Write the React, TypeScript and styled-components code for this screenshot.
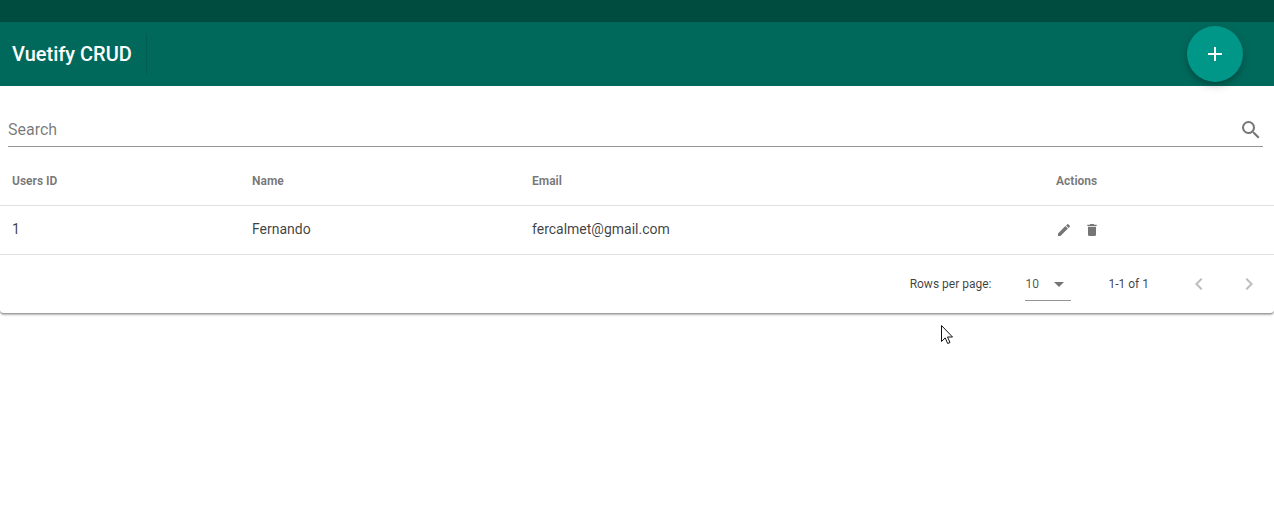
import React from "react";
import styled, { createGlobalStyle } from "styled-components";

const GlobalStyle = createGlobalStyle`
  *, *::before, *::after { box-sizing: border-box; }
  body {
    margin: 0;
    background: #fff;
    color: rgba(0, 0, 0, 0.87);
    font-family: Roboto, "Liberation Sans", sans-serif;
    font-size: 16px;
    line-height: 24px;
  }
  button, input, select { font: inherit; color: inherit; }
`;

const Page = styled.div`
  position: relative;
  min-height: 100vh;
`;

const SystemBar = styled.div`
  height: 22px;
  background: #004d40;
`;

const Toolbar = styled.header`
  position: relative;
  z-index: 1;
  display: flex;
  align-items: center;
  height: 64px;
  padding: 0 31px 0 12px;
  background: #00695c;
  color: #fff;
`;

const Title = styled.h1`
  margin: 0;
  font-size: 20px;
  font-weight: 500;
  line-height: 24px;
`;

const ToolbarDivider = styled.span`
  width: 1px;
  height: 40px;
  margin-left: 14px;
  background: rgba(0, 0, 0, 0.12);
`;

const Spacer = styled.div`
  flex: 1;
`;

const IconSvg = styled.svg<{ $size: number }>`
  display: block;
  flex: none;
  width: ${(p) => p.$size}px;
  height: ${(p) => p.$size}px;
  fill: currentColor;
`;

const AddButton = styled.button`
  display: flex;
  align-items: center;
  justify-content: center;
  width: 56px;
  height: 56px;
  padding: 0;
  border: 0;
  border-radius: 50%;
  background: #009688;
  cursor: pointer;
  box-shadow: 0 3px 5px -1px rgba(0, 0, 0, 0.2), 0 5px 8px rgba(0, 0, 0, 0.1),
    0 1px 14px rgba(0, 0, 0, 0.06);
`;

const Card = styled.main`
  border-bottom: 1px solid #a0a0a0;
  border-radius: 0 0 4px 4px;
  background: #fff;
  box-shadow: 0 1px 2px rgba(0, 0, 0, 0.3);
`;

const SearchField = styled.label`
  display: flex;
  align-items: center;
  height: 37px;
  margin: 0 11px 10px 8px;
  padding-top: 3px;
  border-bottom: 1px solid rgba(0, 0, 0, 0.42);
  color: rgba(0, 0, 0, 0.54);
`;

const SearchArea = styled.section`
  padding-top: 24px;
  overflow: hidden;
`;

const SearchInput = styled.input`
  flex: 1;
  min-width: 0;
  height: 32px;
  padding: 0;
  border: 0;
  outline: 0;
  background: transparent;
  &::placeholder {
    color: rgba(0, 0, 0, 0.54);
    opacity: 1;
  }
`;

const Table = styled.table`
  width: 100%;
  table-layout: fixed;
  border-collapse: separate;
  border-spacing: 0;
`;

const HeadCell = styled.th<{ $width?: number }>`
  width: ${(p) => (p.$width ? `${p.$width}px` : "auto")};
  height: 49px;
  padding: 0 12px;
  border-bottom: 1px solid rgba(0, 0, 0, 0.12);
  color: rgba(0, 0, 0, 0.54);
  font-size: 12px;
  font-weight: 700;
  text-align: left;
`;

const Cell = styled.td`
  height: 49px;
  padding: 0 12px 2px;
  border-bottom: 1px solid rgba(0, 0, 0, 0.12);
  color: rgba(0, 0, 0, 0.76);
  font-size: 14px;
`;

const Actions = styled.div`
  display: flex;
  gap: 12px;
  padding-top: 2px;
`;

const IconButton = styled.button`
  display: flex;
  padding: 0;
  border: 0;
  background: none;
  color: rgba(0, 0, 0, 0.54);
  cursor: pointer;
`;

const Footer = styled.footer`
  display: flex;
  align-items: center;
  justify-content: flex-end;
  height: 58px;
  padding-right: 7px;
  color: rgba(0, 0, 0, 0.76);
  font-size: 12px;
`;

const PageSize = styled.label`
  display: flex;
  align-items: center;
  gap: 34px;
`;

const SelectBox = styled.span`
  display: grid;
  align-items: center;
  justify-items: end;
  width: 46px;
  height: 33px;
  border-bottom: 1px solid rgba(0, 0, 0, 0.42);
  color: rgba(0, 0, 0, 0.54);
  > * { grid-area: 1 / 1; }
  > svg { pointer-events: none; }
`;

const Select = styled.select`
  width: 100%;
  height: 32px;
  padding: 0;
  border: 0;
  outline: 0;
  appearance: none;
  background: transparent;
  color: rgba(0, 0, 0, 0.7);
`;

const PageRange = styled.span`
  margin: 0 32px 0 37px;
`;

const Pager = styled.nav`
  display: flex;
  gap: 14px;
`;

const PageButton = styled.button`
  display: flex;
  align-items: center;
  justify-content: center;
  width: 36px;
  height: 36px;
  padding: 0;
  border: 0;
  background: none;
  color: rgba(0, 0, 0, 0.26);
`;

const Pointer = styled.svg`
  position: absolute;
  top: 325px;
  left: 941px;
  width: 12px;
  height: 20px;
  pointer-events: none;
`;

const paths = {
  plus: "M19 13h-6v6h-2v-6H5v-2h6V5h2v6h6v2z",
  search:
    "M9.5 3A6.5 6.5 0 0 1 16 9.5c0 1.61-.59 3.09-1.56 4.23l.27.27h.79l5 5-1.5 1.5-5-5v-.79l-.27-.27A6.516 6.516 0 0 1 9.5 16a6.5 6.5 0 0 1 0-13m0 2C7 5 5 7 5 9.5S7 14 9.5 14 14 12 14 9.5 12 5 9.5 5z",
  pencil:
    "M20.71 7.04c.39-.39.39-1.04 0-1.41l-2.34-2.34c-.37-.39-1.02-.39-1.41 0l-1.84 1.83 3.75 3.75M3 17.25V21h3.75L17.81 9.93l-3.75-3.75L3 17.25z",
  trash:
    "M19 4h-3.5l-1-1h-5l-1 1H5v2h14M6 19a2 2 0 0 0 2 2h8a2 2 0 0 0 2-2V7H6v12z",
  caret: "M7 10l5 5 5-5H7z",
  left: "M15.41 16.58L10.83 12l4.58-4.59L14 6l-6 6 6 6 1.41-1.42z",
  right: "M8.59 16.58L13.17 12 8.59 7.41 10 6l6 6-6 6-1.41-1.42z",
};

function Icon({ name, size = 24 }: { name: keyof typeof paths; size?: number }) {
  return (
    <IconSvg $size={size} viewBox="0 0 24 24" aria-hidden="true">
      <path d={paths[name]} />
    </IconSvg>
  );
}

const columns = [
  { title: "Users ID", width: 240 },
  { title: "Name", width: 280 },
  { title: "Email" },
  { title: "Actions", width: 230 },
];

const users = [{ id: 1, name: "Fernando", email: "fercalmet@gmail.com" }];

export default function App() {
  return (
    <Page>
      <GlobalStyle />
      <SystemBar />
      <Toolbar>
        <Title>Vuetify CRUD</Title>
        <ToolbarDivider />
        <Spacer />
        <AddButton type="button" aria-label="Add user">
          <Icon name="plus" />
        </AddButton>
      </Toolbar>
      <Card>
        <SearchArea>
          <SearchField>
            <SearchInput type="text" placeholder="Search" aria-label="Search" />
            <Icon name="search" />
          </SearchField>
        </SearchArea>
        <Table>
          <thead>
            <tr>
              {columns.map((c) => (
                <HeadCell key={c.title} $width={c.width} scope="col">
                  {c.title}
                </HeadCell>
              ))}
            </tr>
          </thead>
          <tbody>
            {users.map((u) => (
              <tr key={u.id}>
                <Cell>{u.id}</Cell>
                <Cell>{u.name}</Cell>
                <Cell>{u.email}</Cell>
                <Cell>
                  <Actions>
                    <IconButton type="button" aria-label="Edit">
                      <Icon name="pencil" size={16} />
                    </IconButton>
                    <IconButton type="button" aria-label="Delete">
                      <Icon name="trash" size={16} />
                    </IconButton>
                  </Actions>
                </Cell>
              </tr>
            ))}
          </tbody>
        </Table>
        <Footer>
          <PageSize>
            Rows per page:
            <SelectBox>
              <Select defaultValue="10">
                <option>5</option>
                <option>10</option>
                <option>15</option>
              </Select>
              <Icon name="caret" />
            </SelectBox>
          </PageSize>
          <PageRange>1-1 of 1</PageRange>
          <Pager aria-label="Pagination">
            <PageButton type="button" aria-label="Previous page" disabled>
              <Icon name="left" />
            </PageButton>
            <PageButton type="button" aria-label="Next page" disabled>
              <Icon name="right" />
            </PageButton>
          </Pager>
        </Footer>
      </Card>
      <Pointer viewBox="0 0 12 20" aria-hidden="true">
        <path
          d="M.5.5v16l3.7-3.6 2.5 5.6 2.3-1-2.5-5.5h5z"
          fill="#fff"
          stroke="#111"
          strokeWidth="1"
        />
      </Pointer>
    </Page>
  );
}
